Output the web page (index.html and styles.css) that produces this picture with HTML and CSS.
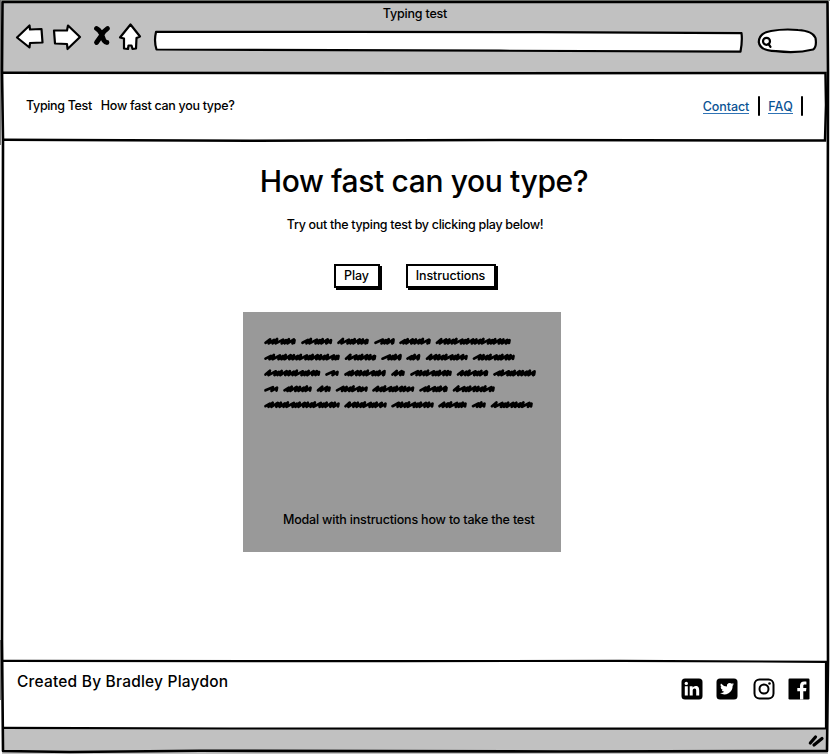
FILE: index.html
```html
<!DOCTYPE html>
<html lang="en">
<head>
<meta charset="utf-8">
<title>Typing test</title>
<link rel="stylesheet" href="styles.css">
</head>
<body>
<div class="window">
  <header class="chrome">
    <div class="window-title"><span class="t-title">Typing test</span></div>
    <div class="toolbar">
      <svg class="tools" width="130" height="32" viewBox="14 21 130 32">
        <g fill="#fff" stroke="#000" stroke-width="2.2" stroke-linejoin="round">
          <path d="M17 37.5L29.500 25.500L30 29.500L41.500 29L42.500 42.500L30 43L29.500 47.500Z"/>
          <path d="M54 30.500L67 30.500L68 25.500L80 37L67.500 49L67 44L55 43.500Z"/>
          <path d="M130.500 24.500L140 36.500L136.500 38L136 48.500L132.500 49L131.500 45.500L128.500 45.500L128 49L124 48.500L124 38.500L120 37.500Z"/>
        </g>
        <path d="M96.500 28.500Q99 29.500 101.500 34L104 40.500Q105.500 42.500 107 42.500M107.500 28.500Q103.500 31 101.500 35.500L96.500 42.500" fill="none" stroke="#000" stroke-width="4.800" stroke-linecap="round"/>
      </svg>
      <svg class="address" width="591" height="24" viewBox="153 29 591 24">
        <path d="M156 31.900L350 31.800L540 32.200L741.500 33.200Q742.500 41 740.500 51.600L500 50.700L156.500 49.500Q153.800 41 156 31.900Z" fill="#fff" stroke="#000" stroke-width="2.200" stroke-linejoin="round"/>
      </svg>
      <svg class="search" width="62" height="28" viewBox="757 27 62 28">
        <path d="M771 31Q784 28.600 798 30Q813 31 815.500 38Q817 47 813 49.500Q797 53.500 776 51.200Q760 51 758.800 42Q759 33 771 31Z" fill="#fff" stroke="#000" stroke-width="2.200"/>
        <circle cx="766.500" cy="41.300" r="3.500" fill="none" stroke="#000" stroke-width="2.200"/>
        <path d="M768.500 44L770.500 46.800" stroke="#000" stroke-width="2.200" stroke-linecap="round"/>
      </svg>
    </div>
  </header>

  <nav class="nav">
    <span class="t-brand">Typing Test</span>
    <span class="t-tagline">How fast can you type?</span>
    <div class="links">
      <a href="#" class="t-contact">Contact</a><i class="bar"></i>
      <a href="#" class="t-faq">FAQ</a><i class="bar"></i>
    </div>
  </nav>

  <main class="main">
    <h1 class="t-h1">How fast can you type?</h1>
    <p class="lead t-lead">Try out the typing test by clicking play below!</p>
    <div class="buttons">
      <button class="btn btn-play"><span>Play</span></button>
      <button class="btn btn-instructions"><span>Instructions</span></button>
    </div>
    <section class="modal">
      <svg class="scribble" id="scribble" width="318" height="120" viewBox="243 312 318 120"></svg>
      <p class="t-modal">Modal with instructions how to take the test</p>
    </section>
  </main>

  <footer class="footer">
    <span class="t-credit">Created By Bradley Playdon</span>
    <div class="social">
      <svg width="22" height="22" viewBox="0 0 22 22"><rect x=".5" y=".5" width="21" height="21" rx="3.500"/><g fill="#fff"><circle cx="5.300" cy="5.400" r="1.700"/><path d="M3.800 8.300h3v9.200h-3zM8.700 8.300h2.900v1.300q.9-1.600 3-1.600c3 0 3.600 2 3.600 4.500v5h-3v-4.700c0-1.200-.1-2.400-1.600-2.400s-1.900 1.200-1.900 2.400v4.700h-3z"/></g></svg>
      <svg width="22" height="22" viewBox="0 0 22 22"><rect x=".5" y=".5" width="21" height="21" rx="3.500"/><path fill="#fff" d="M18 6.200a6 6 0 0 1-1.600.5 2.900 2.900 0 0 0 1.200-1.600 6 6 0 0 1-1.800.7 2.900 2.900 0 0 0-4.900 2.600A8.100 8.100 0 0 1 5 5.400a2.900 2.900 0 0 0 .9 3.800 3 3 0 0 1-1.300-.4 2.900 2.900 0 0 0 2.300 2.900 3 3 0 0 1-1.300 0 2.900 2.900 0 0 0 2.700 2A5.800 5.800 0 0 1 4 15a8.200 8.200 0 0 0 12.600-7.300A6 6 0 0 0 18 6.200z"/></svg>
      <svg width="22" height="22" viewBox="0 0 22 22"><rect x="1.500" y="1.500" width="19" height="19" rx="5" fill="none" stroke="#000" stroke-width="2"/><circle cx="11" cy="11" r="4.500" fill="none" stroke="#000" stroke-width="2"/><circle cx="16.500" cy="5.500" r="1.300"/></svg>
      <svg width="22" height="22" viewBox="0 0 22 22"><rect x=".5" y=".5" width="21" height="21" rx="1.200"/><path fill="#fff" d="M12 21.500v-8.200H9.300v-3.200H12V7.800c0-2.700 1.600-4.200 4.100-4.200 1.100 0 2 .1 2.300.1v2.800h-1.600c-1.300 0-1.500.6-1.500 1.500v2.100h3.100l-.4 3.200h-2.700v8.200z"/></svg>
    </div>
  </footer>
  <div class="status">
    <svg width="20" height="16" viewBox="806 733 20 16"><path d="M810.300 743L815.500 737M814 745L822 738.500" stroke="#000" stroke-width="3.200" stroke-linecap="round"/></svg>
  </div>

  <svg class="frame" width="830" height="754" viewBox="0 0 830 754" fill="none" stroke="#000" stroke-width="2">
    <path d="M0 .5H830" stroke="#8b8f8a" stroke-width="1"/>
    <path d="M0.500 0V145M.5 640V700" stroke="#777" stroke-width="1"/>
    <path d="M2.500 2L827.500 2L828 72L827.500 400L828 660L827 751L560 751.500L200 750.800L70 752L3 751L2 640L3 140L2 70Z" stroke-width="2.600" stroke-linejoin="round"/>
    <path d="M3 72.700L400 73.200L825.500 73L826 105L825 140.500L500 140L250 140.800L3 139.800" stroke-width="2.500"/>
    <path d="M3 660.800L400 661.200L620 660.800L826 661.800L826 728.500L560 728.700L230 728.500L3 727.800" stroke-width="2.200"/>
  </svg>
</div>
<script src="script.js"></script>
</body>
</html>
```
FILE: styles.css
```css
* { box-sizing: border-box; }
body {
  margin: 0;
  font: 500 12.5px/16px Inter, "Liberation Sans", sans-serif;
  color: #000;
  background: #fff;
}
h1, p { margin: 0; font-weight: inherit; }
svg { display: block; flex: none; }
.window {
  position: relative;
  display: flex;
  flex-direction: column;
  width: 830px;
  height: 754px;
  overflow: hidden;
  white-space: nowrap;
}
.frame { position: absolute; inset: 0; pointer-events: none; }
.chrome { height: 73px; margin: 0 2px; padding-top: 6px; background: #c1c1c1; }
.window-title { text-align: center; height: 15px; }
.t-title { letter-spacing: -.2px; }
.toolbar { display: flex; align-items: flex-start; padding-left: 12px; }
.address { margin: 8px 13px 0 9px; }
.search { margin-top: 6px; }
.nav { display: flex; align-items: center; height: 67px; padding: 0 27px 2px 26px; }
.t-brand { letter-spacing: -.34px; }
.t-tagline { margin-left: 9px; letter-spacing: -.3px; }
.links { display: flex; align-items: center; margin-left: auto; }
.links a { color: #0b5394; text-decoration: none; border-bottom: 1px solid #2f73b5; line-height: 14px; padding-top: 1px; margin-bottom: -1px; height: 15px; }
.t-contact { letter-spacing: -.1px; }
.t-faq { letter-spacing: .2px; }
.bar { width: 2px; height: 20px; margin: 1px 8px 0 9px; background: #000; border-radius: 1px; }
.bar:last-child { margin: 1px 0 0 8px; }
.main { flex: 1; display: flex; flex-direction: column; align-items: center; }
.t-h1 { margin: 23px 0 0 18px; font-size: 30px; line-height: 36px; letter-spacing: -.37px; }
.lead { margin-top: 18px; letter-spacing: -.3px; }
.buttons { display: flex; gap: 26px; margin-top: 31px; margin-right: 1px; }
.btn {
  height: 24px;
  padding: 0;
  font: inherit;
  letter-spacing: -.1px;
  color: #000;
  background: #fff;
  border: 2px solid #000;
  box-shadow: 2px 2px 0 #000;
  display: flex;
  align-items: center;
  justify-content: center;
}
.btn-play { width: 46px; }
.btn-instructions { width: 90px; }
.modal { width: 318px; height: 240px; margin: 24px 26px 0 0; background: #999; display: flex; flex-direction: column; }
.t-modal { margin: 80px 0 0 40px; letter-spacing: -.19px; }
.footer { display: flex; justify-content: space-between; height: 67px; padding: 12px 20px 0 17px; }
.t-credit { font-size: 15.5px; line-height: 18px; letter-spacing: .21px; }
.social { display: flex; gap: 13px; padding-top: 5px; }
.social svg:nth-child(3) { margin-left: 2px; }
.status { height: 26px; margin: 0 2px; padding: 5px 2px 0 0; background: #c1c1c1; display: flex; justify-content: flex-end; }
```
FILE: script.js
```js
// Placeholder words, one list per line: [start, end] of each scribbled word.
const lines = [
  [[264,296],[301,332.5],[337,369],[374,395],[399,431],[435.5,511]],
  [[264,340],[344.5,376.5],[381,402],[406,420.5],[425.5,468],[472.5,515]],
  [[264,320.5],[325,339],[344,386],[391,405],[410,452],[456.5,488.5],[493,536]],
  [[264,278.5],[283,312],[316.5,331],[335.5,368],[372,414.5],[419,448],[452.5,495]],
  [[264,340],[344,387],[391,434],[438,467],[471.5,486],[490.5,533]]
];
const tops = [2, 1.4, 2.4, 1.8, 1.2, 2.2, 2];
const steps = [4.6, 5.4, 4.4, 7.4, 4.4, 4.2, 6.4];
let out = "";
lines.forEach((words, row) => {
  const y = 341.4 + row * 15.85;
  words.forEach(([a, b], w) => {
    let x = a + 1.5, i = w + row, d = `M${x} ${y + 1.4}`;
    while (x < b - 7) {
      const s = Math.min(steps[i % 7], b - 1.5 - x);
      d += `L${x + s} ${y - tops[i % 7]}L${x + s - 1.4} ${y + 2}`;
      x += s - 1.4;
      i++;
    }
    d += `L${b - 1.5} ${y - 1.2}L${b - 2} ${y + 1.6}`;
    out += `<path d="${d}"/>`;
  });
});
const svg = document.getElementById("scribble");
svg.innerHTML = `<g fill="none" stroke="#000" stroke-width="2.7" stroke-linecap="round" stroke-linejoin="round">${out}</g>`;
```
